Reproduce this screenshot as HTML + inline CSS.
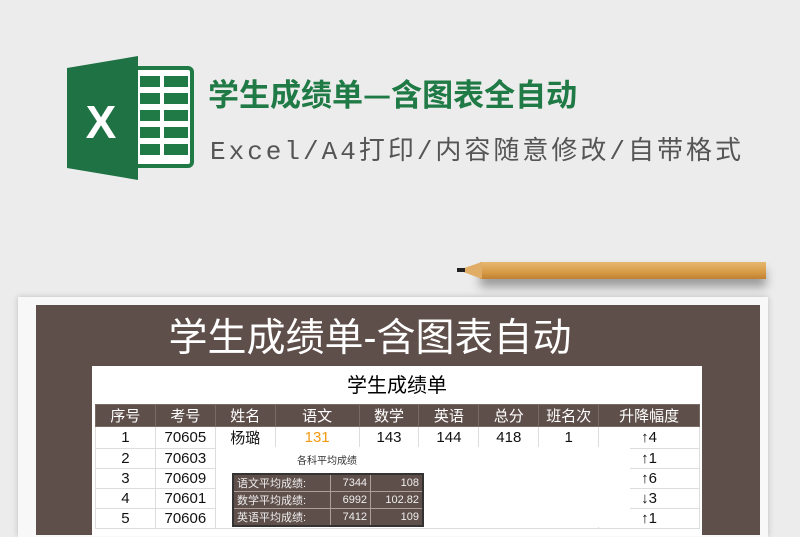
<!DOCTYPE html>
<html><head><meta charset="utf-8"><style>
body{margin:0;width:800px;height:526px;background:#ececec;position:relative;overflow:hidden;font-family:"Liberation Sans","Noto Sans CJK SC",sans-serif}
.a{position:absolute}
table{border-collapse:collapse;position:absolute;left:95px;top:404px;width:605px;font-size:15px;text-align:center}
td{height:19px;border:1px solid #ddd;padding:0;color:#111;background:#fff}
tr.h td{background:#5f4f4a;color:#fff;border-color:#7a6a64;height:21px}
.s td{border:1px solid #ad9f98;color:#eee;font-size:11px;height:14px;padding:0 3px;background:#5f4f4a}
</style></head><body>
<svg class="a" style="left:66px;top:56px" width="130" height="124" viewBox="0 0 130 124">
<rect x="40" y="12" width="86" height="98" rx="4" fill="#fff" stroke="#1f7a45" stroke-width="4"/>
<g fill="#1f7a45">
<rect x="74" y="20" width="20" height="11"/><rect x="98" y="20" width="24" height="11"/>
<rect x="74" y="37" width="20" height="11"/><rect x="98" y="37" width="24" height="11"/>
<rect x="74" y="54" width="20" height="11"/><rect x="98" y="54" width="24" height="11"/>
<rect x="74" y="71" width="20" height="11"/><rect x="98" y="71" width="24" height="11"/>
<rect x="74" y="88" width="20" height="11"/><rect x="98" y="88" width="24" height="11"/>
</g>
<path d="M1 12 L72 0 L72 124 L1 112 Z" fill="#1e7244"/>
<text x="35" y="82" fill="#fff" font-size="46" font-weight="bold" text-anchor="middle" font-family="Liberation Sans">X</text>
</svg>
<div class="a" style="left:208px;top:73px;font-size:31px;font-weight:bold;color:#1f7a45;font-family:'Noto Sans CJK SC',sans-serif;line-height:40px">学生成绩单—含图表全自动</div>
<div class="a" style="left:210px;top:133px;font-size:26px;color:#555;font-family:'Liberation Mono','Noto Sans CJK SC',monospace;line-height:38px;letter-spacing:3px">Excel/A4打印/内容随意修改/自带格式</div>
<div class="a" style="left:480px;top:262px;width:286px;height:17px;background:linear-gradient(#e6b770,#d79b46 60%,#c08030);box-shadow:0 8px 10px rgba(0,0,0,.35)"></div>
<div class="a" style="left:458px;top:262px;width:0;height:0;border-top:8px solid transparent;border-bottom:9px solid transparent;border-right:24px solid #e0ad66"></div>
<div class="a" style="left:457px;top:268px;width:8px;height:4px;background:#222"></div>
<div class="a" style="left:18px;top:297px;width:750px;height:240px;background:#f8f8f8;box-shadow:0 0 6px rgba(0,0,0,.2)"></div>
<div class="a" style="left:36px;top:305px;width:724px;height:230px;background:#5f4f4a"></div>
<div class="a" style="left:0;width:740px;top:314px;text-align:center;color:#fff;font-size:39px;line-height:50px">学生成绩单-含图表自动</div>
<div class="a" style="left:92px;top:366px;width:610px;height:170px;background:#fff"></div>
<div class="a" style="left:92px;width:610px;top:372px;text-align:center;font-size:20px;line-height:28px">学生成绩单</div>
<table>
<colgroup><col width="60"><col width="60"><col width="60"><col width="84"><col width="60"><col width="60"><col width="60"><col width="60"><col width="101"></colgroup>
<tr class="h"><td>序号</td><td>考号</td><td>姓名</td><td>语文</td><td>数学</td><td>英语</td><td>总分</td><td>班名次</td><td>升降幅度</td></tr>
<tr><td>1</td><td>70605</td><td>杨璐</td><td style="color:#f39a12">131</td><td>143</td><td>144</td><td>418</td><td>1</td><td>↑4</td></tr>
<tr><td>2</td><td>70603</td><td colspan="6"></td><td>↑1</td></tr>
<tr><td>3</td><td>70609</td><td colspan="6"></td><td>↑6</td></tr>
<tr><td>4</td><td>70601</td><td colspan="6"></td><td>↓3</td></tr>
<tr><td>5</td><td>70606</td><td colspan="6"></td><td>↑1</td></tr>
</table>
<div class="a" style="left:216px;top:447px;width:414px;height:80px;background:#fff"></div>
<div class="a" style="left:297px;top:452px;font-size:10px;color:#333">各科平均成绩</div>
<table class="s" style="left:232px;top:473px;width:192px;font-size:11px;border:2px solid #333">
<tr><td style="text-align:left">语文平均成绩:</td><td style="text-align:right">7344</td><td style="text-align:right">108</td></tr>
<tr><td style="text-align:left">数学平均成绩:</td><td style="text-align:right">6992</td><td style="text-align:right">102.82</td></tr>
<tr><td style="text-align:left">英语平均成绩:</td><td style="text-align:right">7412</td><td style="text-align:right">109</td></tr>
</table>
</body></html>
